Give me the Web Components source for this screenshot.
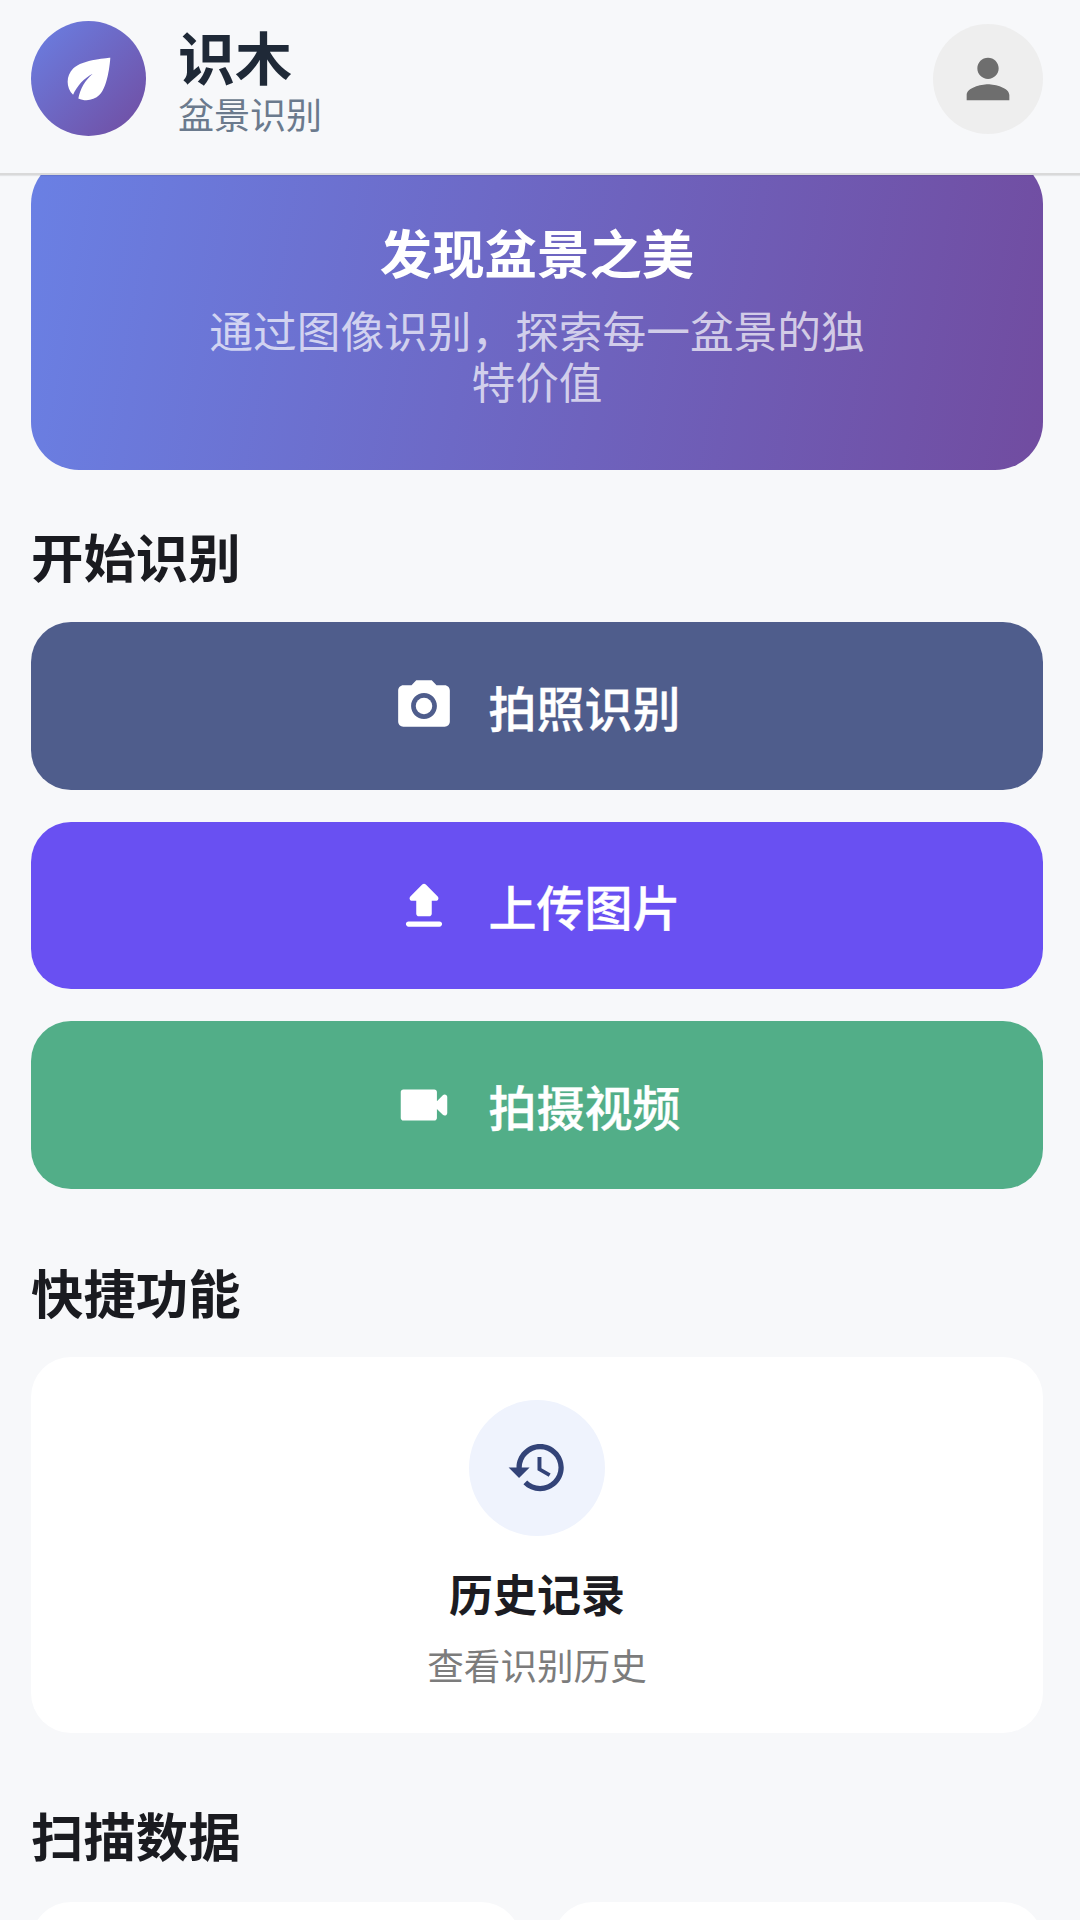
<!DOCTYPE html>
<html lang="zh">
<head>
<meta charset="utf-8">
<title>识木</title>
<style>
  html, body { margin: 0; height: 100%; }
  body {
    background: #f7f8fa;
    font-family: "Noto Sans CJK SC", "Noto Sans", sans-serif;
    overflow: hidden;
  }
</style>
</head>
<body>
<app-page>
  <app-header slot="header" title="识木" subtitle="盆景识别"></app-header>
  <hero-banner heading="发现盆景之美">通过图像识别&#xFF0C;探索每一盆景的独特价值</hero-banner>

  <section-title style="margin-top:48px">开始识别</section-title>
  <action-button icon="camera" color="#4f5d8c" style="margin-top:30px">拍照识别</action-button>
  <action-button icon="upload" color="#6950f2" style="margin-top:32px">上传图片</action-button>
  <action-button icon="video" color="#52ae88" style="margin-top:32px">拍摄视频</action-button>

  <section-title style="margin-top:65px">快捷功能</section-title>
  <feature-card heading="历史记录" text="查看识别历史" style="margin-top:29px"></feature-card>

  <section-title style="margin-top:64px">扫描数据</section-title>
  <stat-row style="margin-top:31px">
    <stat-card></stat-card>
    <stat-card></stat-card>
  </stat-row>
</app-page>

<script>
// material icon paths, all on a 24 box
const ICONS = {
  leaf: '<path d="M6.05 8.05c-2.73 2.73-2.73 7.15-.02 9.88 1.47-3.4 4.09-6.24 7.36-7.93-2.77 2.34-4.71 5.61-5.39 9.32 2.6 1.23 5.8.78 7.95-1.37C19.43 14.47 20 4 20 4S9.53 4.57 6.05 8.05z"/>',
  person: '<path d="M12 12c2.21 0 4-1.79 4-4s-1.79-4-4-4-4 1.79-4 4 1.79 4 4 4zm0 2c-2.67 0-8 1.34-8 4v2h16v-2c0-2.66-5.33-4-8-4z"/>',
  camera: '<circle cx="12" cy="12" r="3.2"/><path d="M9 2 7.17 4H4c-1.1 0-2 .9-2 2v12c0 1.1.9 2 2 2h16c1.1 0 2-.9 2-2V6c0-1.1-.9-2-2-2h-3.17L15 2H9zm3 15c-2.76 0-5-2.24-5-5s2.24-5 5-5 5 2.24 5 5-2.24 5-5 5z"/>',
  upload: '<path d="M10 16h4c.55 0 1-.45 1-1v-5h1.59c.89 0 1.34-1.08.71-1.71L12.71 3.7a.996.996 0 0 0-1.41 0L6.71 8.29c-.63.63-.19 1.71.7 1.71H9v5c0 .55.45 1 1 1zm-4 2h12c.55 0 1 .45 1 1s-.45 1-1 1H6c-.55 0-1-.45-1-1s.45-1 1-1z"/>',
  video: '<path d="M17 10.5V7c0-.55-.45-1-1-1H4c-.55 0-1 .45-1 1v10c0 .55.45 1 1 1h12c.55 0 1-.45 1-1v-3.5l2.29 2.29c.63.63 1.71.18 1.71-.71V8.91c0-.89-1.08-1.34-1.71-.71L17 10.5z"/>',
  history: '<path d="M13 3c-4.97 0-9 4.03-9 9H1l3.89 3.89.07.14L9 12H6c0-3.87 3.13-7 7-7s7 3.13 7 7-3.13 7-7 7c-1.93 0-3.68-.79-4.94-2.06l-1.42 1.42C8.27 19.99 10.51 21 13 21c4.97 0 9-4.03 9-9s-4.03-9-9-9zm-1 5v5l4.28 2.54.72-1.21-3.5-2.08V8H12z"/>'
};
const icon = (name, size) => `<svg width="${size}" height="${size}" viewBox="0 0 24 24" fill="currentColor">${ICONS[name]}</svg>`;

class AppPage extends HTMLElement {
  constructor(){
    super();
    this.attachShadow({mode:"open"});
    this.shadowRoot.innerHTML = `
    <style>
      :host { display:flex; flex-direction:column; height:1920px; overflow:hidden; }
      #scroll { flex:1; min-height:0; overflow:hidden; display:flex; flex-direction:column; padding:0 37px 0 31px; }
      ::slotted(*) { flex:none; }
      ::slotted(hero-banner) { margin-top:-19px; }
    </style>
    <slot name="header"></slot>
    <div id="scroll"><slot></slot></div>`;
  }
}

class AppHeader extends HTMLElement {
  constructor(){
    super();
    this.attachShadow({mode:"open"});
  }
  connectedCallback(){
    this.shadowRoot.innerHTML = `
    <style>
      :host { display:flex; flex:none; align-items:flex-start; height:173px; padding:0 37px 0 31px; background:#f7f8fa; border-bottom:2px solid #d9d9d9; box-shadow:0 1px 1px rgba(0,0,0,.08); position:relative; z-index:2; }
      #logo { width:115px; height:115px; margin-top:21px; border-radius:50%; background:linear-gradient(135deg,#6a80e4,#714ca0); color:#fff; display:flex; align-items:center; justify-content:center; }
      #names { margin:22px 0 0 32px; display:flex; flex-direction:column; flex:1; }
      #title { font-size:57px; font-weight:700; line-height:66px; color:#1f2937; }
      #sub { margin-top:3px; font-size:36px; line-height:44px; color:#6b7a8d; }
      #avatar { width:110px; height:110px; margin-top:24px; border-radius:50%; background:#eeeeee; color:#6e6e6e; display:flex; align-items:center; justify-content:center; }
    </style>
    <div id="logo">${icon("leaf",64)}</div>
    <div id="names"><div id="title">${this.getAttribute("title")}</div><div id="sub">${this.getAttribute("subtitle")}</div></div>
    <div id="avatar">${icon("person",64)}</div>`;
  }
}

class HeroBanner extends HTMLElement {
  constructor(){
    super();
    this.attachShadow({mode:"open"});
  }
  connectedCallback(){
    this.shadowRoot.innerHTML = `
    <style>
      :host { display:flex; flex-direction:column; align-items:center; box-sizing:border-box; height:314px; padding-top:60px; border-radius:48px; background:linear-gradient(100deg,#6a80e4,#714ca0); color:#fff; text-align:center; }
      h1 { margin:0; font-size:52.4px; line-height:70px; font-weight:700; }
      p { margin:18px 0 0; width:680px; font-size:43.7px; line-height:51px; color:rgba(255,255,255,.7); }
    </style>
    <h1>${this.getAttribute("heading")}</h1>
    <p><slot></slot></p>`;
  }
}

class SectionTitle extends HTMLElement {
  constructor(){
    super();
    this.attachShadow({mode:"open"});
    this.shadowRoot.innerHTML = `
    <style>
      :host { display:block; font-size:52.4px; line-height:74px; font-weight:700; color:#1a1b20; }
    </style>
    <slot></slot>`;
  }
}

class ActionButton extends HTMLElement {
  constructor(){
    super();
    this.attachShadow({mode:"open"});
  }
  connectedCallback(){
    this.shadowRoot.innerHTML = `
    <style>
      :host { display:flex; align-items:center; justify-content:center; gap:33px; height:167.5px; border-radius:40px; color:#fff; font-size:48px; font-weight:500; -webkit-text-stroke:.4px #fff; background:${this.getAttribute("color")}; }
      svg { display:block; margin-top:1px; }
    </style>
    ${icon(this.getAttribute("icon"),62)}<span><slot></slot></span>`;
  }
}

class FeatureCard extends HTMLElement {
  constructor(){
    super();
    this.attachShadow({mode:"open"});
  }
  connectedCallback(){
    this.shadowRoot.innerHTML = `
    <style>
      :host { display:flex; flex-direction:column; align-items:center; box-sizing:border-box; height:376px; padding-top:43px; border-radius:40px; background:#fff; text-align:center; }
      #circle { width:136px; height:136px; border-radius:50%; background:#eff3fd; color:#334378; display:flex; align-items:center; justify-content:center; }
      #name { margin-top:25px; font-size:44px; line-height:64px; font-weight:700; color:#1c1c22; }
      #text { margin-top:16px; font-size:36.6px; line-height:48px; color:#7c7c7c; }
    </style>
    <div id="circle">${icon("history",63)}</div>
    <div id="name">${this.getAttribute("heading")}</div>
    <div id="text">${this.getAttribute("text")}</div>`;
  }
}

class StatRow extends HTMLElement {
  constructor(){
    super();
    this.attachShadow({mode:"open"});
    this.shadowRoot.innerHTML = `
    <style>
      :host { display:grid; grid-template-columns:1fr 1fr; gap:32px; }
    </style>
    <slot></slot>`;
  }
}

class StatCard extends HTMLElement {
  constructor(){
    super();
    this.attachShadow({mode:"open"});
    this.shadowRoot.innerHTML = `
    <style>
      :host { display:block; height:220px; border-radius:40px; background:#fff; }
    </style>`;
  }
}

customElements.define("app-page", AppPage);
customElements.define("app-header", AppHeader);
customElements.define("hero-banner", HeroBanner);
customElements.define("section-title", SectionTitle);
customElements.define("action-button", ActionButton);
customElements.define("feature-card", FeatureCard);
customElements.define("stat-row", StatRow);
customElements.define("stat-card", StatCard);
</script>
</body>
</html>
